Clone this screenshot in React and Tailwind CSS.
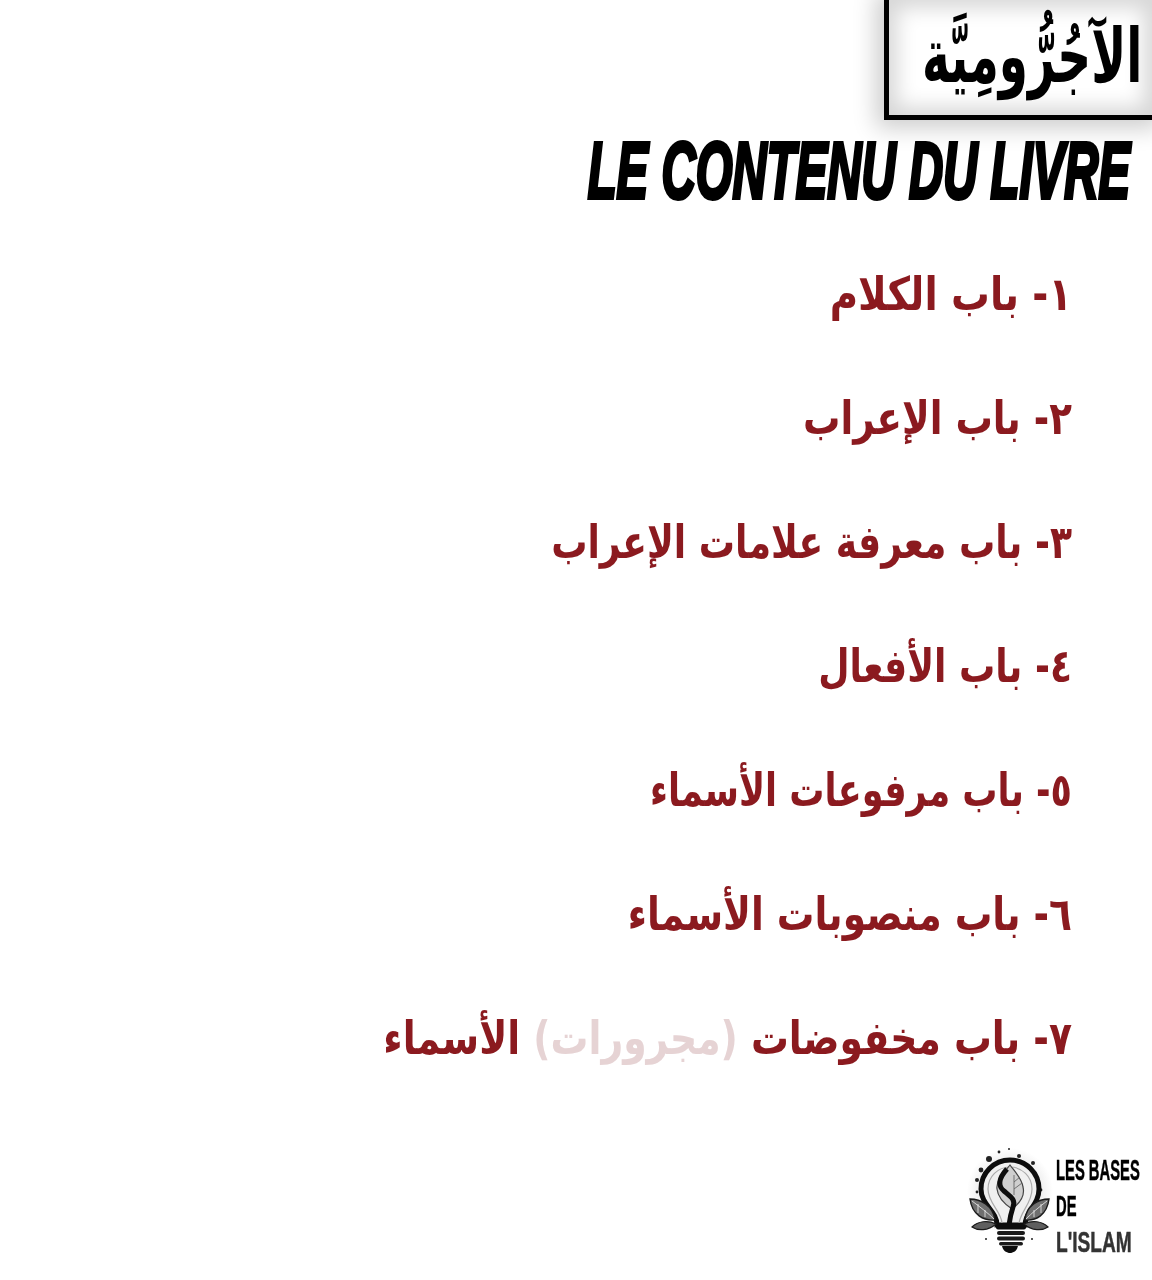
import React from 'react';

const chapters = [
  { num: '١', label: 'باب الكلام', fit: 'scale-x-[0.84]' },
  { num: '٢', label: 'باب الإعراب', fit: 'scale-x-[0.81]' },
  { num: '٣', label: 'باب معرفة علامات الإعراب', fit: 'scale-x-[0.785]' },
  { num: '٤', label: 'باب الأفعال', fit: 'scale-x-[0.785]' },
  { num: '٥', label: 'باب مرفوعات الأسماء', fit: 'scale-x-[0.762]' },
  { num: '٦', label: 'باب منصوبات الأسماء', fit: 'scale-x-[0.815]' },
];

const dots = [
  [23, 14, 3], [33, 7, 1.4], [43, 4, 1], [53, 11, 2], [67, 18, 2], [15, 25, 2.4],
  [11, 35, 2], [11, 47, 1.4], [75, 45, 1.4], [20, 94, 1], [66, 94, 1],
];

const Bulb = () => (
  <svg width="88" height="110" viewBox="0 0 88 110" className="shrink-0">
    <defs>
      <radialGradient id="glow">
        <stop offset="0%" stopColor="#d8d8d8" />
        <stop offset="65%" stopColor="#ececec" />
        <stop offset="100%" stopColor="#ffffff" />
      </radialGradient>
    </defs>
    <circle cx="44" cy="46" r="43" fill="url(#glow)" />
    {dots.map(([cx, cy, r], i) => (
      <circle key={i} cx={cx} cy={cy} r={r} fill="#222" />
    ))}
    <path d="M31 80C31 66 15 60 15 44A29 29 0 0 1 73 44C73 60 59 66 59 80Z" fill="#f0f0f0" stroke="#0d0d0d" strokeWidth="5" />
    <path d="M36 78C35 66 22 58 22 44A22 22 0 0 1 66 44C66 58 55 66 53 78" fill="none" stroke="#aaa" strokeWidth="1.2" />
    <path d="M44 20C36 30 30 36 31 44C32 54 40 60 46 64C54 58 59 50 57 42C56 34 50 28 44 20Z" fill="#cfcfcf" stroke="#444" strokeWidth="1.2" />
    <path d="M41 24C32 34 32 41 38 46C45 52 50 55 47 62C45 68 44 72 43 80" fill="none" stroke="#0d0d0d" strokeWidth="5" />
    <path d="M48 30L48 50M48 37L54 32M48 44L56 38" fill="none" stroke="#666" strokeWidth="0.9" />
    <path d="M29 75C18 76 6 70 4 54C14 54 27 60 29 75Z" fill="#6f6f6f" stroke="#1a1a1a" strokeWidth="1.4" />
    <path d="M6 56C14 62 22 68 28 74M12 59L12 68M19 65L19 72" fill="none" stroke="#eee" strokeWidth="0.8" />
    <path d="M30 79C22 86 12 86 6 82C12 76 22 75 30 79Z" fill="#5f5f5f" stroke="#1a1a1a" strokeWidth="1.2" />
    <path d="M59 75C70 76 81 70 83 54C73 54 60 60 59 75Z" fill="#6f6f6f" stroke="#1a1a1a" strokeWidth="1.4" />
    <path d="M81 56C73 62 66 68 60 74M75 59L75 68M68 65L68 72" fill="none" stroke="#eee" strokeWidth="0.8" />
    <path d="M58 79C66 86 76 86 82 82C76 76 66 75 58 79Z" fill="#5f5f5f" stroke="#1a1a1a" strokeWidth="1.2" />
    <rect x="30" y="80" width="30" height="4.5" rx="2" fill="#0d0d0d" />
    <rect x="31" y="86" width="28" height="4" rx="2" fill="#1a1a1a" />
    <rect x="31" y="91.5" width="28" height="4" rx="2" fill="#1a1a1a" />
    <rect x="33" y="97" width="24" height="3.5" rx="1.7" fill="#1a1a1a" />
    <path d="M36 101H52C51 106 47 108 44 108C41 108 37 106 36 101Z" fill="#0d0d0d" />
  </svg>
);

const App = () => {
  return (
    <div className="w-[1152px] h-[1280px] bg-white overflow-hidden flex flex-col font-['DejaVu_Sans',sans-serif]">
      {/* framed logo */}
      <div className="flex justify-end shrink-0">
        <div className="w-[268px] h-[120px] border-l-[5px] border-b-[5px] border-black bg-white shadow-[0_0_22px_8px_rgba(0,0,0,0.2),inset_0_0_20px_8px_rgba(0,0,0,0.16)] flex items-center justify-center pl-[24px]">
          <span dir="rtl" className="text-[50px] font-bold text-black leading-none whitespace-nowrap scale-x-[0.94] scale-y-[1.5] -mt-1">الآجُرُّومِيَّة</span>
        </div>
      </div>

      <div className="flex justify-end pr-[22px] mt-[11px]">
        <h1 className="text-[79px] leading-[80px] italic font-bold text-black uppercase whitespace-nowrap font-['Liberation_Sans',sans-serif] [-webkit-text-stroke:4px_black] origin-right scale-x-[0.6]">
          Le contenu du livre
        </h1>
      </div>

      {/* chapter list */}
      <ul dir="rtl" className="flex flex-col gap-[60px] pr-[80px] mt-[51px] text-[46px] leading-[64px] font-bold text-[#8b1a1f]">
        {chapters.map((c) => (
          <li key={c.num} className={`whitespace-nowrap origin-right ${c.fit}`}>{c.num}- {c.label}</li>
        ))}
        <li className="whitespace-nowrap origin-right scale-x-[0.82]">
          ٧- باب مخفوضات <span className="text-[#e6d3d4]">(مجرورات)</span> الأسماء
        </li>
      </ul>

      {/* footer mark */}
      <div className="flex justify-end items-center gap-[2px] pr-[12px] mt-auto mb-[24px]">
        <Bulb />
        <div className="w-[84px] mt-[14px] flex flex-col gap-[9px] text-[29px] leading-[27px] font-bold font-['Liberation_Sans',sans-serif] [-webkit-text-stroke:0.5px_currentColor]">
          <span className="text-black whitespace-nowrap origin-left scale-x-[0.51]">LES BASES</span>
          <span className="text-black whitespace-nowrap origin-left scale-x-[0.51]">DE</span>
          <span className="text-[#333] whitespace-nowrap origin-left scale-x-[0.66] blur-[0.6px]">L'ISLAM</span>
        </div>
      </div>
    </div>
  );
};

export default App;
